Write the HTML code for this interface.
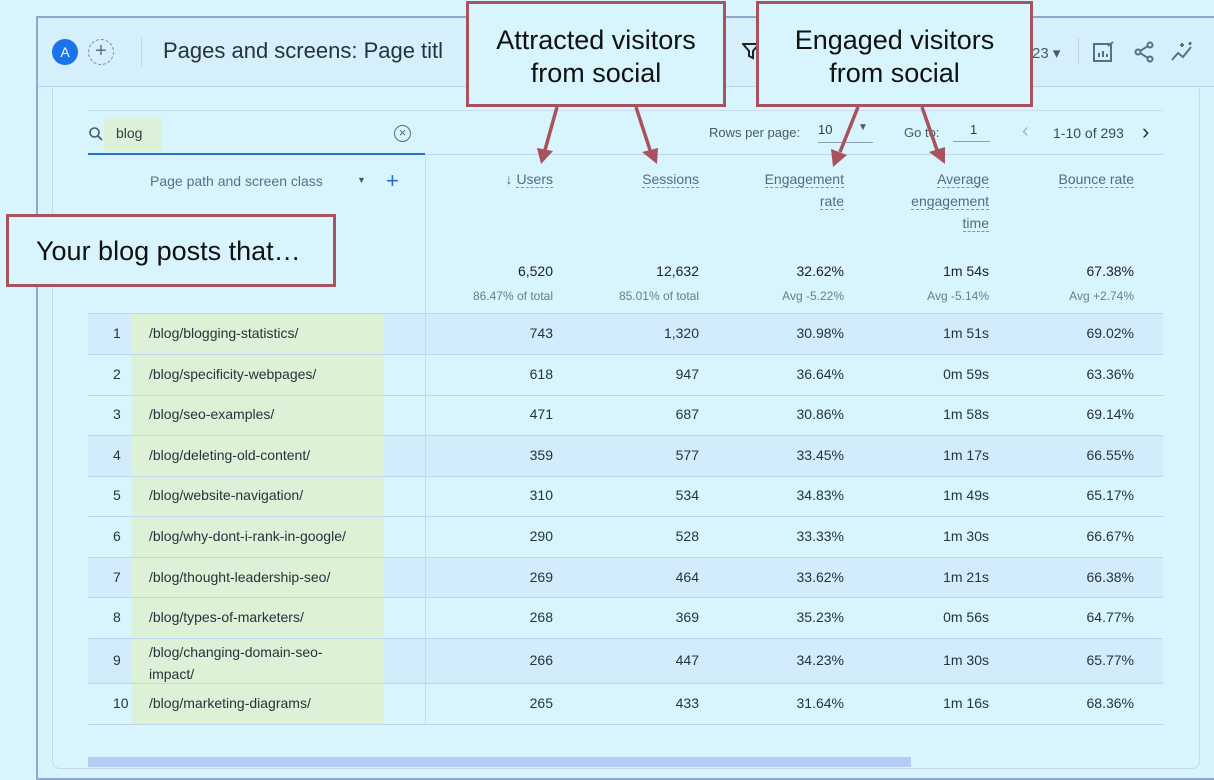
<!DOCTYPE html>
<html><head><meta charset="utf-8"><style>
*{margin:0;padding:0;box-sizing:border-box}
body{width:1214px;height:780px;background:#d9f4fc;font-family:"Liberation Sans",sans-serif;position:relative;overflow:hidden;color:#2b3a45}
.abs{position:absolute}
.frame{left:36px;top:16px;width:1190px;height:764px;border:2px solid #8fa8cf;border-right:none;background:#d8f3fc}
.hdr{left:38px;top:18px;width:1176px;height:69px;background:#d5effb;border-bottom:1px solid #b9d4ec}
.card{left:52px;top:88px;width:1148px;height:681px;border:1px solid #c5dbe9;border-top:none;border-radius:0 0 8px 8px;background:#d8f4fd}
.t{font-size:14px;color:#2f3d48;white-space:nowrap}
.r{text-align:right}
.g{color:#6b7c88;font-size:12px}
.hd{font-size:14px;color:#556a7e;text-align:right;line-height:22px}
.hd span{border-bottom:1.5px dashed #7d93a8}
.call{background:#d8f4fc;border:3px solid #a9525f;font-size:27px;color:#111;text-align:center;line-height:33px}
.row{left:88px;width:1075px;border-top:1px solid #bcd6ee}
.rn{position:absolute;font-size:14px;color:#26333d;white-space:nowrap}
</style></head><body>
<div class="abs frame"></div>
<div class="abs hdr"></div>
<div class="abs card"></div>
<!-- header -->
<div class="abs" style="left:52px;top:39px;width:26px;height:26px;border-radius:50%;background:#1a73e8;color:#fff;font-size:14px;text-align:center;line-height:26px">A</div>
<div class="abs" style="left:88px;top:39px;width:26px;height:26px;border-radius:50%;border:1px dashed #7b8a96;color:#5f6b76;font-size:20px;text-align:center;line-height:23px">+</div>
<div class="abs" style="left:141px;top:38px;width:1px;height:28px;background:#c4d5e0"></div>
<div class="abs" style="left:163px;top:38px;font-size:22px;color:#26323c">Pages and screens: Page titl</div>
<svg class="abs" style="left:742px;top:42px" width="18" height="18" viewBox="0 0 18 18"><path d="M1 2h16l-6 7v7l-4-2V9z" fill="none" stroke="#222" stroke-width="2"/></svg>
<div class="abs" style="left:1032px;top:44px;font-size:15px;color:#4a5a66">23 ▾</div>
<div class="abs" style="left:1078px;top:38px;width:1px;height:26px;background:#c4d5e0"></div>
<svg class="abs" style="left:1092px;top:40px" width="24" height="24" viewBox="0 0 24 24" fill="none" stroke="#56708a" stroke-width="2"><rect x="2" y="4" width="17" height="17"/><path d="M7 17v-4M11 17v-6M15 17v-3M16 6l5-4"/></svg>
<svg class="abs" style="left:1132px;top:40px" width="24" height="24" viewBox="0 0 24 24" fill="none" stroke="#56708a" stroke-width="2"><circle cx="18" cy="5" r="2.5"/><circle cx="6" cy="12" r="2.5"/><circle cx="18" cy="19" r="2.5"/><path d="M8 11l8-5M8 13l8 5"/></svg>
<svg class="abs" style="left:1170px;top:40px" width="26" height="24" viewBox="0 0 26 24" fill="none" stroke="#56708a" stroke-width="2"><path d="M2 20l6-7 5 4 8-10"/><path d="M12 3v4M10 5h4M20 2v3M18.5 3.5h3"/></svg>
<!-- search -->
<svg class="abs" style="left:88px;top:126px" width="16" height="16" viewBox="0 0 16 16" fill="none" stroke="#4a5a66" stroke-width="1.6"><circle cx="6.5" cy="6.5" r="4.5"/><path d="M10 10l4 4"/></svg>
<div class="abs" style="left:104px;top:117px;width:58px;height:34px;background:#dcf2d8"></div>
<div class="abs t" style="left:116px;top:125px">blog</div>
<div class="abs" style="left:394px;top:125px;width:17px;height:17px;border:1.5px solid #5d6b76;border-radius:50%;font-size:13px;line-height:13px;text-align:center;color:#5d6b76">×</div>
<div class="abs" style="left:88px;top:153px;width:337px;height:2px;background:#2d6ec2"></div>
<div class="abs" style="left:425px;top:154px;width:738px;height:1px;background:#bcd6ee"></div>
<div class="abs" style="left:88px;top:110px;width:1075px;height:1px;background:#c8dcec"></div>
<div class="abs t" style="left:709px;top:125px;font-size:13px;color:#4a5a66">Rows per page:</div>
<div class="abs t" style="left:818px;top:122px;font-size:13px">10</div>
<div class="abs" style="left:858px;top:122px;font-size:10px;color:#556">▼</div>
<div class="abs" style="left:818px;top:142px;width:55px;height:1px;background:#8ca0b4"></div>
<div class="abs t" style="left:904px;top:125px;font-size:13px;color:#4a5a66">Go to:</div>
<div class="abs t" style="left:970px;top:122px;font-size:13px">1</div>
<div class="abs" style="left:953px;top:141px;width:37px;height:1px;background:#8ca0b4"></div>
<div class="abs" style="left:1022px;top:120px;font-size:20px;color:#9fb4cc">‹</div>
<div class="abs t" style="left:1053px;top:125px;color:#3a4a56">1-10 of 293</div>
<div class="abs" style="left:1142px;top:119px;font-size:22px;color:#2a3540">›</div>
<!-- header cols -->
<div class="abs t" style="left:150px;top:173px;color:#5d6f82">Page path and screen class</div>
<div class="abs" style="left:357px;top:175px;font-size:9px;color:#556">▼</div>
<div class="abs" style="left:386px;top:168px;font-size:22px;color:#2b6fd0">+</div>
<div class="abs hd" style="right:661px;top:168px">↓ <span>Users</span></div>
<div class="abs hd" style="right:515px;top:168px"><span>Sessions</span></div>
<div class="abs hd" style="right:370px;top:168px"><span>Engagement</span><br><span>rate</span></div>
<div class="abs hd" style="right:225px;top:168px"><span>Average</span><br><span>engagement</span><br><span>time</span></div>
<div class="abs hd" style="right:80px;top:168px"><span>Bounce rate</span></div>
<!-- totals -->
<div class="abs t r" style="right:661px;top:263px;color:#222">6,520</div>
<div class="abs t r" style="right:515px;top:263px;color:#222">12,632</div>
<div class="abs t r" style="right:370px;top:263px;color:#222">32.62%</div>
<div class="abs t r" style="right:225px;top:263px;color:#222">1m 54s</div>
<div class="abs t r" style="right:80px;top:263px;color:#222">67.38%</div>
<div class="abs g" style="right:661px;top:289px">86.47% of total</div>
<div class="abs g" style="right:515px;top:289px">85.01% of total</div>
<div class="abs g" style="right:370px;top:289px">Avg -5.22%</div>
<div class="abs g" style="right:225px;top:289px">Avg -5.14%</div>
<div class="abs g" style="right:80px;top:289px">Avg +2.74%</div>
<!-- rows -->
<div class="abs" style="left:88px;top:314px;width:1075px;height:40px;background:#d3ecfb"></div>
<div class="abs" style="left:88px;top:435px;width:1075px;height:41px;background:#d3ecfb"></div>
<div class="abs" style="left:88px;top:557px;width:1075px;height:40px;background:#d3ecfb"></div>
<div class="abs" style="left:88px;top:638px;width:1075px;height:45px;background:#d3ecfb"></div>
<div class="abs" style="left:132px;top:313px;width:252px;height:411px;background:#dcf1d6"></div>
<div class="abs" style="left:425px;top:155px;width:1px;height:569px;background:#c3dbee"></div>
<div class="abs row" style="top:313px"></div>
<div class="abs row" style="top:354px"></div>
<div class="abs row" style="top:395px"></div>
<div class="abs row" style="top:435px"></div>
<div class="abs row" style="top:476px"></div>
<div class="abs row" style="top:516px"></div>
<div class="abs row" style="top:557px"></div>
<div class="abs row" style="top:597px"></div>
<div class="abs row" style="top:638px"></div>
<div class="abs row" style="top:683px"></div>
<div class="abs row" style="top:724px"></div>
<div class="abs" style="left:88px;top:757px;width:823px;height:10px;background:#b5cbf4"></div>

<div class="rn" style="left:113px;top:325px">1</div><div class="rn" style="left:149px;top:325px">/blog/blogging-statistics/</div>
<div class="rn" style="right:661px;top:325px">743</div><div class="rn" style="right:515px;top:325px">1,320</div><div class="rn" style="right:370px;top:325px">30.98%</div><div class="rn" style="right:225px;top:325px">1m 51s</div><div class="rn" style="right:80px;top:325px">69.02%</div>
<div class="rn" style="left:113px;top:366px">2</div><div class="rn" style="left:149px;top:366px">/blog/specificity-webpages/</div>
<div class="rn" style="right:661px;top:366px">618</div><div class="rn" style="right:515px;top:366px">947</div><div class="rn" style="right:370px;top:366px">36.64%</div><div class="rn" style="right:225px;top:366px">0m 59s</div><div class="rn" style="right:80px;top:366px">63.36%</div>
<div class="rn" style="left:113px;top:406px">3</div><div class="rn" style="left:149px;top:406px">/blog/seo-examples/</div>
<div class="rn" style="right:661px;top:406px">471</div><div class="rn" style="right:515px;top:406px">687</div><div class="rn" style="right:370px;top:406px">30.86%</div><div class="rn" style="right:225px;top:406px">1m 58s</div><div class="rn" style="right:80px;top:406px">69.14%</div>
<div class="rn" style="left:113px;top:447px">4</div><div class="rn" style="left:149px;top:447px">/blog/deleting-old-content/</div>
<div class="rn" style="right:661px;top:447px">359</div><div class="rn" style="right:515px;top:447px">577</div><div class="rn" style="right:370px;top:447px">33.45%</div><div class="rn" style="right:225px;top:447px">1m 17s</div><div class="rn" style="right:80px;top:447px">66.55%</div>
<div class="rn" style="left:113px;top:487px">5</div><div class="rn" style="left:149px;top:487px">/blog/website-navigation/</div>
<div class="rn" style="right:661px;top:487px">310</div><div class="rn" style="right:515px;top:487px">534</div><div class="rn" style="right:370px;top:487px">34.83%</div><div class="rn" style="right:225px;top:487px">1m 49s</div><div class="rn" style="right:80px;top:487px">65.17%</div>
<div class="rn" style="left:113px;top:528px">6</div><div class="rn" style="left:149px;top:528px">/blog/why-dont-i-rank-in-google/</div>
<div class="rn" style="right:661px;top:528px">290</div><div class="rn" style="right:515px;top:528px">528</div><div class="rn" style="right:370px;top:528px">33.33%</div><div class="rn" style="right:225px;top:528px">1m 30s</div><div class="rn" style="right:80px;top:528px">66.67%</div>
<div class="rn" style="left:113px;top:569px">7</div><div class="rn" style="left:149px;top:569px">/blog/thought-leadership-seo/</div>
<div class="rn" style="right:661px;top:569px">269</div><div class="rn" style="right:515px;top:569px">464</div><div class="rn" style="right:370px;top:569px">33.62%</div><div class="rn" style="right:225px;top:569px">1m 21s</div><div class="rn" style="right:80px;top:569px">66.38%</div>
<div class="rn" style="left:113px;top:609px">8</div><div class="rn" style="left:149px;top:609px">/blog/types-of-marketers/</div>
<div class="rn" style="right:661px;top:609px">268</div><div class="rn" style="right:515px;top:609px">369</div><div class="rn" style="right:370px;top:609px">35.23%</div><div class="rn" style="right:225px;top:609px">0m 56s</div><div class="rn" style="right:80px;top:609px">64.77%</div>
<div class="rn" style="left:113px;top:652px">9</div><div class="rn" style="left:149px;top:641px;line-height:22px">/blog/changing-domain-seo-<br>impact/</div>
<div class="rn" style="right:661px;top:652px">266</div><div class="rn" style="right:515px;top:652px">447</div><div class="rn" style="right:370px;top:652px">34.23%</div><div class="rn" style="right:225px;top:652px">1m 30s</div><div class="rn" style="right:80px;top:652px">65.77%</div>
<div class="rn" style="left:113px;top:695px">10</div><div class="rn" style="left:149px;top:695px">/blog/marketing-diagrams/</div>
<div class="rn" style="right:661px;top:695px">265</div><div class="rn" style="right:515px;top:695px">433</div><div class="rn" style="right:370px;top:695px">31.64%</div><div class="rn" style="right:225px;top:695px">1m 16s</div><div class="rn" style="right:80px;top:695px">68.36%</div>
<!-- callouts -->
<div class="abs call" style="left:466px;top:1px;width:260px;height:106px;padding-top:20px">Attracted visitors<br>from social</div>
<div class="abs call" style="left:756px;top:1px;width:277px;height:106px;padding-top:20px">Engaged visitors<br>from social</div>
<div class="abs call" style="left:6px;top:214px;width:330px;height:73px;text-align:left;padding:18px 0 0 27px">Your blog posts that…</div>
<svg class="abs" style="left:0;top:0" width="1214" height="200" fill="#a9525f" stroke="#a9525f" stroke-width="3.5">
<line x1="557" y1="107" x2="545" y2="150"/><polygon points="537,148 553,151 541,164" stroke="none"/>
<line x1="636" y1="107" x2="650" y2="150"/><polygon points="642,152 658,148 657,164" stroke="none"/>
<line x1="858" y1="107" x2="840" y2="152"/><polygon points="831,149 847,155 833,167" stroke="none"/>
<line x1="922" y1="107" x2="937" y2="150"/><polygon points="929,152 945,147 945,164" stroke="none"/>
</svg>
</body></html>
